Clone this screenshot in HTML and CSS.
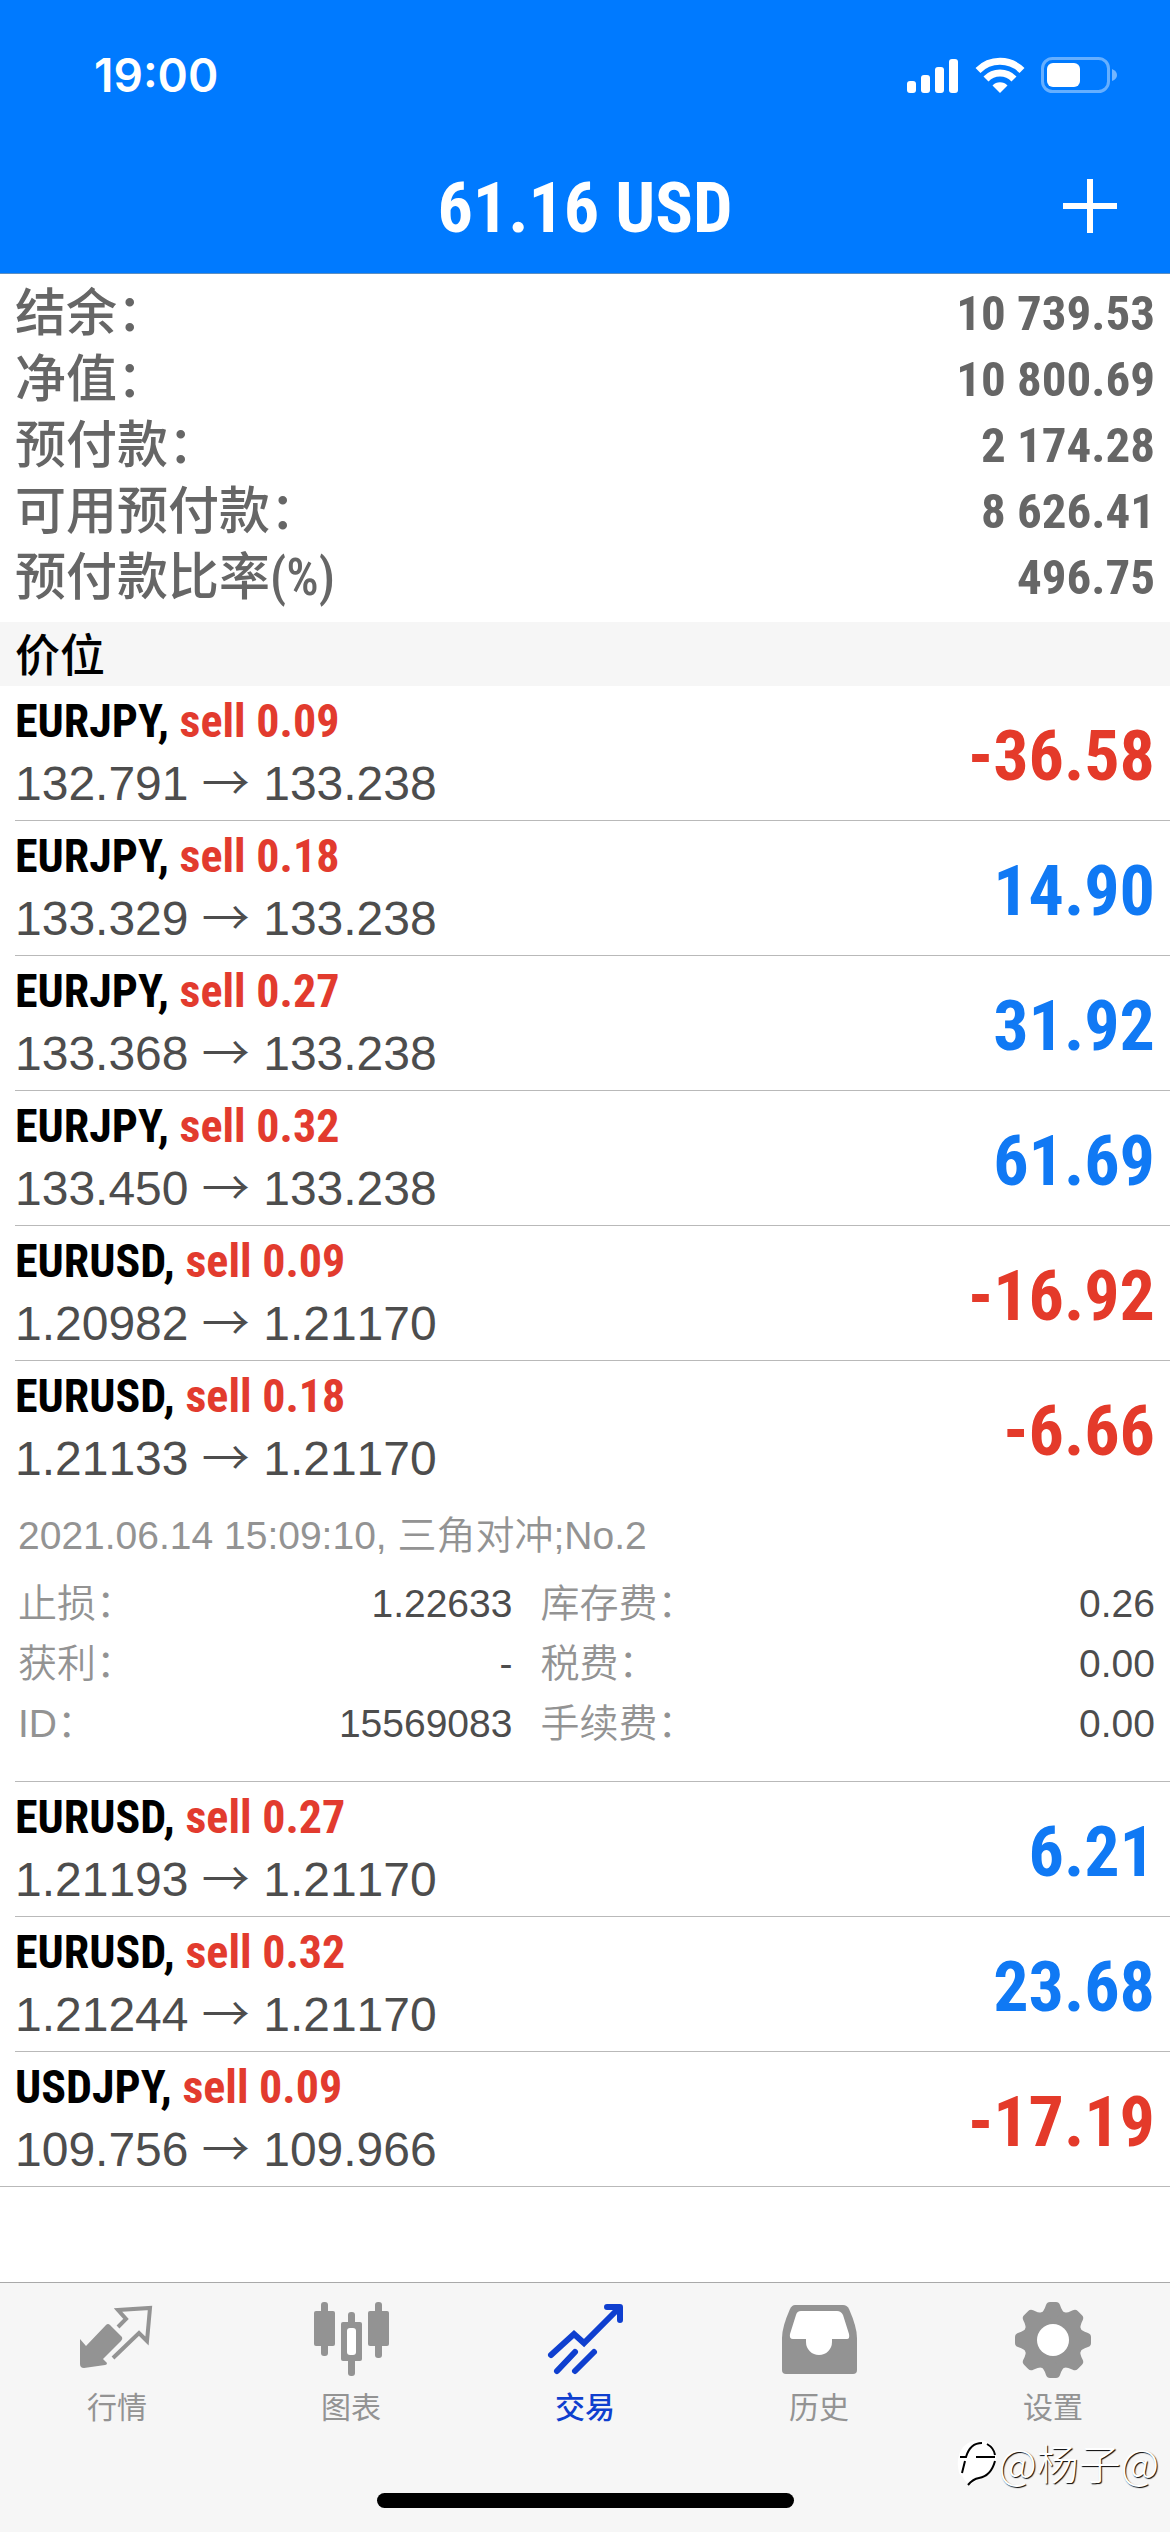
FILE: index.html
```html
<!DOCTYPE html>
<html lang="zh-CN">
<head>
<meta charset="utf-8">
<meta name="viewport" content="width=device-width, initial-scale=1">
<title>交易</title>
<link rel="stylesheet" href="styles.css">
</head>
<body>
<div class="app">
  <header class="header">
    <div class="status">
      <span class="clock">19:00</span>
      <div class="status-icons">
        <svg width="52" height="36" viewBox="0 0 52 36" fill="#fff"><rect y="24" width="9" height="12" rx="3"/><rect x="14" y="18" width="9" height="18" rx="3"/><rect x="28" y="10" width="9" height="26" rx="3"/><rect x="42" y="2" width="9" height="34" rx="3"/></svg>
        <svg width="50" height="36" viewBox="0 0 50 36" fill="none" stroke="#fff" stroke-width="7"><path d="M3 13.500A31 31 0 0 1 47 13.500"/><path d="M11 22A19.500 19.500 0 0 1 39 22"/><path d="M25 36L17.500 28.500A10.500 10.500 0 0 1 32.500 28.500Z" fill="#fff" stroke="none"/></svg>
        <svg width="76" height="36" viewBox="0 0 76 36"><rect x="1.500" y="1.500" width="66" height="33" rx="10" fill="none" stroke="#fff" stroke-opacity=".4" stroke-width="3"/><rect x="6" y="6" width="33" height="24" rx="6" fill="#fff"/><path d="M71 12q5 2 5 6t-5 6z" fill="#fff" fill-opacity=".45"/></svg>
      </div>
    </div>
    <div class="titlebar">
      <h1 class="title">61.16 USD</h1>
      <button class="add" type="button" aria-label="新订单"><svg width="56" height="56" viewBox="0 0 56 56" stroke="#fff" stroke-width="6"><path d="M28 1V55M1 28H55"/></svg></button>
    </div>
  </header>
  <main class="main">
    <dl class="summary">
      <div><dt>结余：</dt><dd>10 739.53</dd></div>
      <div><dt>净值：</dt><dd>10 800.69</dd></div>
      <div><dt>预付款：</dt><dd>2 174.28</dd></div>
      <div><dt>可用预付款：</dt><dd>8 626.41</dd></div>
      <div><dt>预付款比率(%)</dt><dd>496.75</dd></div>
    </dl>
    <h2 class="section">价位</h2>
    <ul class="positions">
      <li class="position"><div class="row"><div><p class="symbol">EURJPY, <span>sell 0.09</span></p><p class="prices">132.791 <span>→</span> 133.238</p></div><strong class="profit loss">-36.58</strong></div></li>
      <li class="position"><div class="row"><div><p class="symbol">EURJPY, <span>sell 0.18</span></p><p class="prices">133.329 <span>→</span> 133.238</p></div><strong class="profit">14.90</strong></div></li>
      <li class="position"><div class="row"><div><p class="symbol">EURJPY, <span>sell 0.27</span></p><p class="prices">133.368 <span>→</span> 133.238</p></div><strong class="profit">31.92</strong></div></li>
      <li class="position"><div class="row"><div><p class="symbol">EURJPY, <span>sell 0.32</span></p><p class="prices">133.450 <span>→</span> 133.238</p></div><strong class="profit">61.69</strong></div></li>
      <li class="position"><div class="row"><div><p class="symbol">EURUSD, <span>sell 0.09</span></p><p class="prices">1.20982 <span>→</span> 1.21170</p></div><strong class="profit loss">-16.92</strong></div></li>
      <li class="position"><div class="row"><div><p class="symbol">EURUSD, <span>sell 0.18</span></p><p class="prices">1.21133 <span>→</span> 1.21170</p></div><strong class="profit loss">-6.66</strong></div>
        <div class="details">
          <p class="comment">2021.06.14 15:09:10, 三角对冲;No.2</p>
          <dl class="fields">
            <div><dt>止损：</dt><dd>1.22633</dd></div>
            <div><dt>库存费：</dt><dd>0.26</dd></div>
            <div><dt>获利：</dt><dd>-</dd></div>
            <div><dt>税费：</dt><dd>0.00</dd></div>
            <div><dt>ID：</dt><dd>15569083</dd></div>
            <div><dt>手续费：</dt><dd>0.00</dd></div>
          </dl>
        </div>
      </li>
      <li class="position"><div class="row"><div><p class="symbol">EURUSD, <span>sell 0.27</span></p><p class="prices">1.21193 <span>→</span> 1.21170</p></div><strong class="profit">6.21</strong></div></li>
      <li class="position"><div class="row"><div><p class="symbol">EURUSD, <span>sell 0.32</span></p><p class="prices">1.21244 <span>→</span> 1.21170</p></div><strong class="profit">23.68</strong></div></li>
      <li class="position"><div class="row"><div><p class="symbol">USDJPY, <span>sell 0.09</span></p><p class="prices">109.756 <span>→</span> 109.966</p></div><strong class="profit loss">-17.19</strong></div></li>
    </ul>
  </main>
  <footer class="footer">
    <nav class="tabs">
      <a class="tab" href="#quotes"><svg viewBox="0 0 76 76"><path d="M1 37L7 44L27 23Q29 21 31 23L43 35Q44 37 42 39L24 57L28 61Q28 63 26 63L5 66Q1 66 1 62Z" fill="currentColor"/><path d="M39 25L47 17L39 8L71 6L68 39L60 31L34 56" fill="none" stroke="currentColor" stroke-width="4"/></svg>行情</a>
      <a class="tab" href="#charts"><svg viewBox="0 0 76 76" fill="currentColor"><rect x="1" y="9" width="21" height="35" rx="2"/><rect x="8" width="7" height="54" rx="3"/><rect x="55" y="9" width="21" height="35" rx="2"/><rect x="62" width="7" height="56" rx="3"/><rect x="35" y="10" width="7" height="64" rx="3"/><rect x="28" y="20" width="21" height="39" rx="2"/><rect x="34" y="26" width="9" height="27" rx="3" fill="#fff"/></svg>图表</a>
      <a class="tab active" href="#trade" aria-current="page"><svg viewBox="0 0 76 76" fill="none" stroke="currentColor" stroke-width="6" stroke-linecap="round"><path d="M4 53L27 32L37 41L72 6"/><path d="M60 5H73V18" stroke-linejoin="round"/><path d="M28 50L10 69M47 50L28 69"/></svg>交易</a>
      <a class="tab" href="#history"><svg viewBox="0 0 76 76"><path d="M14 3H62Q66 3 68 7Q76 25 76 36V68Q76 72 72 72H5Q1 72 1 68V36Q1 25 9 7Q11 3 14 3Z" fill="currentColor"/><path d="M20 9H56Q60 9 62 13L68 32Q69 37 66 37H51V40A13 13 0 0 1 25 40V37H12Q8 37 9 32L15 13Q16 9 20 9Z" fill="#fff"/></svg>历史</a>
      <a class="tab" href="#settings"><svg viewBox="0 0 76 76"><g fill="currentColor"><circle cx="38" cy="38" r="30"/><path id="tooth" d="M24 13Q29 10 31 3Q32 0 35 0H41Q44 0 45 3Q47 10 52 13V63Q47 66 45 73Q44 76 41 76H35Q32 76 31 73Q29 66 24 63Z"/><use href="#tooth" transform="rotate(45 38 38)"/><use href="#tooth" transform="rotate(90 38 38)"/><use href="#tooth" transform="rotate(135 38 38)"/></g><circle cx="38" cy="38" r="16" fill="#fff"/></svg>设置</a>
    </nav>
    <div class="home-indicator"></div>
    <div class="watermark"><svg width="44" height="50" viewBox="0 0 44 50"><path d="M4 36Q0 20 8 10Q16 2 26 3Q40 5 41 20Q41 34 28 40L16 47Q10 46 8 40Z" fill="#fff"/><path d="M7 36L10 24M5 20H11Q15 6 27 6M32 7Q39 11 40 18M21 20H40M40 24Q36 39 24 41Q18 42 13 48" fill="none" stroke="#000" stroke-width="2"/></svg>@杨子@</div>
  </footer>
</div>
</body>
</html>
```
FILE: styles.css
```css
* { box-sizing: border-box; margin: 0; padding: 0; }

body {
  background: #fff;
  color: #000;
  font-family: "Liberation Sans", "Noto Sans CJK SC", sans-serif;
}

.app { min-height: 100vh; display: flex; flex-direction: column; }

.header { background: #007aff; color: #fff; border-bottom: 1px solid #5f8fc0; }
.status { height: 138px; padding: 12px 53px 0 94px; display: flex; align-items: center; justify-content: space-between; }
.clock { font: 600 46px/56px Inter, sans-serif; }
.status-icons { display: flex; align-items: center; gap: 16px; }
.titlebar { height: 135px; padding: 0 52px; display: grid; grid-template-columns: 1fr auto 1fr; align-items: center; }
.title { grid-column: 2; padding-top: 4px; font: bold 70px/88px "Roboto Condensed", "Liberation Sans", sans-serif; }
.add { justify-self: end; border: 0; background: none; display: flex; }

.main { flex: 1; }
.summary { padding: 7px 15px 11px; color: #666; font: 500 51px/66px "Roboto Condensed", "Noto Sans CJK SC", sans-serif; }
.summary div { display: flex; justify-content: space-between; }
.summary dd { font-size: 49px; font-weight: bold; }
.section { padding: 0 15px 2px; background: #f6f6f6; font: 500 45px/62px "Noto Sans CJK SC", sans-serif; }

.positions { list-style: none; }
.position { margin-left: 15px; border-bottom: 1px solid #b9b9b9; }
.position:last-child { margin-left: 0; padding-left: 15px; }
.row { height: 134px; padding-right: 15px; display: flex; align-items: center; justify-content: space-between; }
.symbol { font: bold 46px/62px "Roboto Condensed", "Liberation Sans", sans-serif; }
.symbol span { color: #e23b2e; }
.prices { color: #4d4d4d; font-size: 48px; line-height: 64px; font-kerning: none; }
.prices span { font: 350 48px/48px "Noto Sans CJK SC", sans-serif; }
.profit { padding-top: 6px; color: #1079f4; font: bold 70px/88px "Roboto Condensed", "Liberation Sans", sans-serif; }
.loss { color: #e43a2a; }

.details { padding: 7px 15px 27px 3px; font: 350 39px/60px "Liberation Sans", "Noto Sans CJK SC", sans-serif; color: #939393; }
.comment { line-height: 68px; padding-bottom: 2px; }
.fields { display: grid; grid-template-columns: 494fr 614fr; column-gap: 28px; padding-top: 2px; }
.fields div { display: flex; justify-content: space-between; }
.fields dd { color: #4d4d4d; }

.footer { position: relative; background: #f6f6f6; border-top: 1px solid #a9a9a9; padding-bottom: 24px; }
.tabs { display: grid; grid-template-columns: repeat(5, 1fr); padding-top: 19px; }
.tab { display: flex; flex-direction: column; align-items: center; gap: 5px; color: #939393; font: 400 30px/44px "Noto Sans CJK SC", sans-serif; text-decoration: none; }
.tab svg { width: 76px; height: 76px; }
.tab.active { color: #0f3fcf; font-weight: 500; }
.home-indicator { width: 417px; height: 15px; margin: 66px auto 0; border-radius: 8px; background: #000; }
.watermark { position: absolute; right: 11px; bottom: 40px; display: flex; align-items: center; color: #fff; font: 300 42px/60px "Noto Sans CJK SC", sans-serif; text-shadow: 1px 1px 1px #000; }
```
